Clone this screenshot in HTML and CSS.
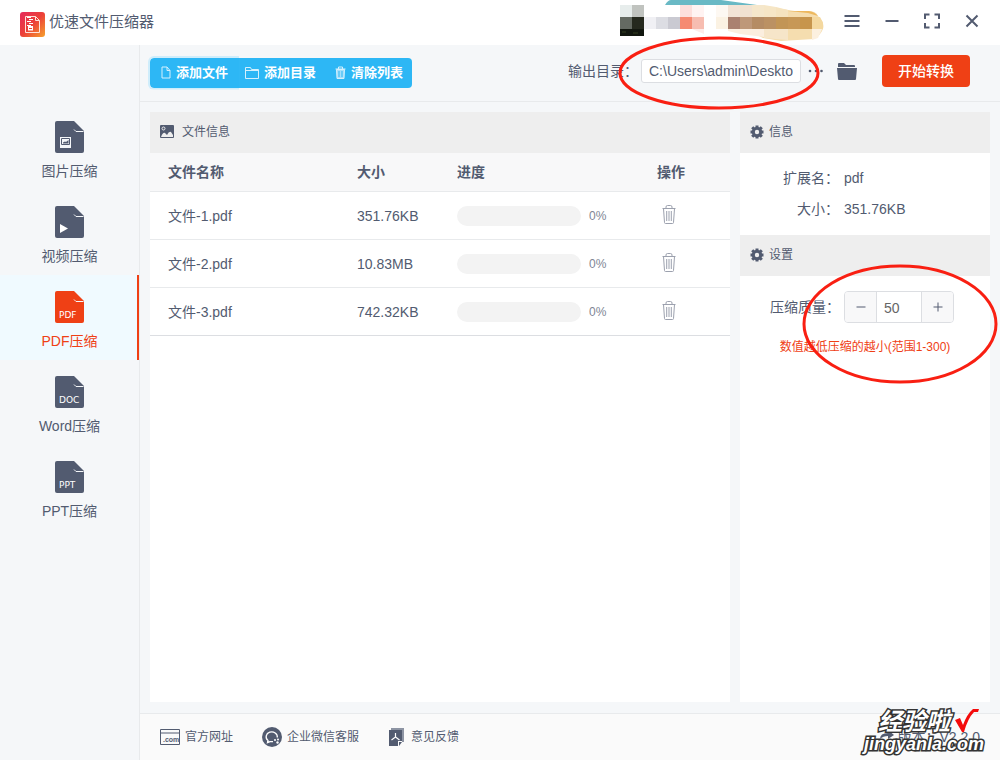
FILE: index.html
```html
<!DOCTYPE html>
<html lang="zh-CN">
<head>
<meta charset="utf-8">
<meta name="viewport" content="width=device-width, initial-scale=1">
<title>优速文件压缩器</title>
<link rel="stylesheet" href="styles.css">
</head>
<body>
<svg class="sprite" aria-hidden="true">
  <symbol id="sheet" viewBox="0 0 29 32"><path d="M2 0h17l10 10v20a2 2 0 0 1-2 2H2a2 2 0 0 1-2-2V2a2 2 0 0 1 2-2z" fill="currentColor"/><path d="M19 8.500l2 2h7.500" fill="none" stroke="#f5f7f9" stroke-width="1"/></symbol>
  <symbol id="trash" viewBox="0 0 14 19"><path d="M.5 3.500h13M4 3.500V2a1.500 1.500 0 0 1 1.500-1.500h3A1.500 1.500 0 0 1 10 2v1.500M1.500 3.500l1 14a1 1 0 0 0 1 1h7a1 1 0 0 0 1-1l1-14M4.700 6v10M7 6v10M9.300 6v10" fill="none" stroke="currentColor"/></symbol>
  <symbol id="gear" viewBox="0 0 14 14"><circle cx="7" cy="7" r="3.700" fill="none" stroke="currentColor" stroke-width="3"/><path d="M7 .5v2.500M7 11v2.500M.5 7H3M11 7h2.500M2.200 2.200L4 4M10 10l1.800 1.800M2.200 11.800L4 10M10 4l1.800-1.800" stroke="currentColor" stroke-width="3"/></symbol>
</svg>

<header class="titlebar">
  <svg class="logo" viewBox="0 0 25 25" aria-hidden="true">
    <defs><linearGradient id="lg" x1="0" y1="0" x2="1" y2="1"><stop offset="0" stop-color="#e52a5c"/><stop offset=".5" stop-color="#ec4038"/><stop offset="1" stop-color="#f6a22d"/></linearGradient></defs>
    <rect width="25" height="25" rx="3" fill="url(#lg)"/>
    <path d="M5.500 4.500h10l4 4V20.500h-14zM15.500 4.500v4h4" fill="none" stroke="#ffe3dc"/>
    <path d="M7 5.500h4M9 7.500h4M7 9.500h4M9 11.500h4M7 13.500h4" stroke="#fff"/>
    <path d="M8 14h5v4.500H8z" fill="#fff"/><path d="M9 16.500h3" stroke="#ec4038"/>
  </svg>
  <h1 class="app-name">优速文件压缩器</h1>
  <svg class="avatar" viewBox="0 0 204 42" aria-hidden="true">
    <path d="M45 5Q48 0 51 0h50l36 5z" fill="#69b9c5"/>
    <path d="M137 5l44 7q14-3 17 4 7 6 5 13-3 7-9 10l-33 2-18-3-8-4z" fill="#f5ddaf"/>
    <path d="M168 11h21q6 1 9 5l-10-3z" fill="#edb85e"/>
    <path d="M0 5h12v12H0z" fill="#e7edec"/><path d="M12 5h12v12H12z" fill="#c0c3bf"/>
    <path d="M0 17h12v12H0z" fill="#646a62"/><path d="M12 17h12v12H12z" fill="#25291e"/>
    <path d="M0 29h24v7H0z" fill="#12170f"/><path d="M2 32h4M13 33h5" stroke="#333e20"/>
    <path d="M24 17h12v12H24z" fill="#f0f0f4"/><path d="M36 17h12v12H36z" fill="#dcdde3"/><path d="M48 17h12v12H48z" fill="#cacad2"/>
    <path d="M60 5h12v12H60z" fill="#fddfdc"/><path d="M72 5h12v12H72z" fill="#fff3f2"/>
    <path d="M60 17h12v12H60z" fill="#f58a72"/><path d="M72 17h12v12H72z" fill="#f7bdb1"/>
    <path d="M60 29h12l12 5V29z" fill="#fdece9"/>
    <path d="M96 17h12v12H96z" fill="#fbf2e3"/><path d="M96 5h12v12H96z" fill="#fdf8f2"/>
    <path d="M108 5h12v12h-12z" fill="#f2e3d6"/><path d="M120 5h12v12h-12z" fill="#f1e2d1"/><path d="M132 5h12v12h-12z" fill="#f5e7cb"/><path d="M144 5l12 2v10h-12z" fill="#f6e6c6"/><path d="M156 7l12 3v7h-12z" fill="#f5e3bf"/>
    <path d="M108 17h12v12h-12z" fill="#aa8170"/><path d="M120 17h12v12h-12z" fill="#be9879"/><path d="M132 17h12v12h-12z" fill="#b58c64"/><path d="M144 17h12v12h-12z" fill="#bb9163"/><path d="M156 17h12v12h-12z" fill="#c29556"/><path d="M168 17h12v12h-12z" fill="#c79857"/><path d="M180 17h12v12h-12z" fill="#c7954c"/><path d="M192 17h8l3 6v6h-11z" fill="#f4d89f"/>
    <path d="M108 29h36v8l-24-3-12-3z" fill="#fbeedf"/><path d="M144 29h24v11l-24-2z" fill="#f6e5c9"/><path d="M192 29h10l-4 9-6 2z" fill="#fcf0df"/>
  </svg>
  <div class="window-controls">
    <button type="button" aria-label="菜单"><svg viewBox="0 0 16 16"><path d="M.5 3h15M.5 8h15M.5 13h15"/></svg></button>
    <button type="button" aria-label="最小化"><svg viewBox="0 0 16 16"><path d="M1.500 8h13"/></svg></button>
    <button type="button" aria-label="最大化"><svg viewBox="0 0 16 16"><path d="M1 6V1.500h4.500M10.500 1.500H15V6M15 10v4.500h-4.500M5.500 14.500H1V10" stroke-width="2"/></svg></button>
    <button type="button" aria-label="关闭"><svg viewBox="0 0 16 16"><path d="M2.500 2.500l11 11M13.500 2.500l-11 11"/></svg></button>
  </div>
</header>

<div class="shell">
  <nav class="sidebar">
    <a class="nav-item" href="#image"><svg class="nav-icon" viewBox="0 0 29 32"><use href="#sheet"/><path d="M5 16h11v11H5z" fill="#f5f7f9"/><path d="M6.500 17.500h8v6h-8z" fill="none" stroke="#525b70"/><path d="M8 22.500v-1l2-1 1 .5 2.500-2v3.500z" fill="#525b70"/></svg><span>图片压缩</span></a>
    <a class="nav-item" href="#video"><svg class="nav-icon" viewBox="0 0 29 32"><use href="#sheet"/><path d="M5 18l8 4.500-8 4.500z" fill="#fff"/></svg><span>视频压缩</span></a>
    <a class="nav-item nav-item--active" href="#pdf" aria-current="page"><svg class="nav-icon" viewBox="0 0 29 32"><use href="#sheet"/><text class="nav-tag" x="4" y="27">PDF</text></svg><span>PDF压缩</span></a>
    <a class="nav-item" href="#word"><svg class="nav-icon" viewBox="0 0 29 32"><use href="#sheet"/><text class="nav-tag" x="4" y="27">DOC</text></svg><span>Word压缩</span></a>
    <a class="nav-item" href="#ppt"><svg class="nav-icon" viewBox="0 0 29 32"><use href="#sheet"/><text class="nav-tag" x="4" y="27">PPT</text></svg><span>PPT压缩</span></a>
  </nav>

  <div class="workspace">
    <div class="toolbar">
      <div class="actions">
        <button class="action action--focus" type="button"><svg width="10" height="13" viewBox="0 0 10 13"><path d="M1 1h5l3 3.500V12H1zM6 1v3.500h3"/></svg>添加文件</button>
        <button class="action" type="button"><svg width="14" height="12" viewBox="0 0 14 12"><path d="M.5 11.500V.5h5l1 2h7v9zM.5 3.500h13"/></svg>添加目录</button>
        <button class="action" type="button"><svg width="11" height="13" viewBox="0 0 11 13"><path d="M.5 3h10M3.500 3V1h4v2"/><path d="M1.500 3.500l.5 9h7l.5-9z" fill="#a6dffb"/><path d="M4 5v6M7 5v6" stroke="#2db7f5"/></svg>清除列表</button>
      </div>
      <div class="output">
        <label for="outdir">输出目录：</label>
        <span class="path-wrap">
          <input class="path" id="outdir" type="text" value="C:\Users\admin\Deskto">
          <svg class="mark mark--path" viewBox="0 0 202 74" aria-hidden="true"><ellipse cx="101" cy="37" rx="99" ry="35"/></svg>
        </span>
        <button class="plain more" type="button" aria-label="更多"><svg width="16" height="4" viewBox="0 0 16 4"><circle cx="2" cy="2" r="1.300"/><circle cx="8" cy="2" r="1.300"/><circle cx="13.500" cy="2" r="1.300"/></svg></button>
        <button class="plain folder" type="button" aria-label="打开目录"><svg width="20" height="17" viewBox="0 0 20 17"><path d="M1 4V1q0-1 1-1h5l2 2h8q1 0 1 1v1z"/><path d="M0 5h20l-1 11q0 1-1 1H2q-1 0-1-1z"/></svg></button>
        <button class="start" type="button">开始转换</button>
      </div>
    </div>

    <div class="content">
      <main class="panel files">
        <h2 class="panel-head files-head"><svg width="14" height="14" viewBox="0 0 14 14"><rect width="14" height="13" rx="1" fill="currentColor"/><circle cx="3.500" cy="3.500" r="1.500" fill="none" stroke="#eee"/><path d="M1 12q2-5 4-4l2 2q2-4 4-3l2 3v2z" fill="#eee"/></svg>文件信息</h2>
        <table class="file-table">
          <colgroup><col><col class="col-size"><col class="col-progress"><col class="col-op"></colgroup>
          <thead><tr><th scope="col">文件名称</th><th scope="col">大小</th><th scope="col">进度</th><th scope="col">操作</th></tr></thead>
          <tbody>
            <tr><td>文件-1.pdf</td><td>351.76KB</td><td><div class="progress"><span class="bar"></span>0%</div></td><td><button class="plain delete" type="button" aria-label="删除"><svg width="14" height="19"><use href="#trash"/></svg></button></td></tr>
            <tr><td>文件-2.pdf</td><td>10.83MB</td><td><div class="progress"><span class="bar"></span>0%</div></td><td><button class="plain delete" type="button" aria-label="删除"><svg width="14" height="19"><use href="#trash"/></svg></button></td></tr>
            <tr><td>文件-3.pdf</td><td>742.32KB</td><td><div class="progress"><span class="bar"></span>0%</div></td><td><button class="plain delete" type="button" aria-label="删除"><svg width="14" height="19"><use href="#trash"/></svg></button></td></tr>
          </tbody>
        </table>
      </main>

      <aside class="panel details">
        <h2 class="panel-head"><svg width="14" height="14"><use href="#gear"/></svg>信息</h2>
        <dl class="info"><dt>扩展名：</dt><dd>pdf</dd><dt>大小：</dt><dd>351.76KB</dd></dl>
        <h2 class="panel-head"><svg width="14" height="14"><use href="#gear"/></svg>设置</h2>
        <div class="settings">
          <div class="quality">
            <label for="quality">压缩质量：</label>
            <div class="stepper">
              <button type="button" aria-label="减少"><svg width="10" height="10" viewBox="0 0 10 10"><path d="M.5 5h9"/></svg></button>
              <input id="quality" type="text" inputmode="numeric" value="50">
              <button type="button" aria-label="增加"><svg width="10" height="10" viewBox="0 0 10 10"><path d="M.5 5h9M5 .5v9"/></svg></button>
            </div>
          </div>
          <p class="hint">数值越低压缩的越小(范围1-300)</p>
          <svg class="mark mark--quality" viewBox="0 0 198 120" aria-hidden="true"><ellipse cx="99" cy="60" rx="96" ry="58"/></svg>
        </div>
      </aside>
    </div>

    <footer class="footer">
      <a href="#site"><svg width="20" height="16" viewBox="0 0 20 16"><path d="M.5.5h19v15H.5zM.5 4h19" fill="none" stroke="currentColor"/><text class="com-tag" x="3" y="13">.com</text></svg>官方网址</a>
      <a href="#wechat"><svg width="20" height="20" viewBox="0 0 20 20"><circle cx="10" cy="10" r="10" fill="currentColor"/><path d="M11 14.600l-3 0-2.500 1 .5-2A5.600 5 0 1 1 15.300 10.500" fill="none" stroke="#fff" stroke-width="1.300"/><circle cx="13" cy="13" r="1" fill="#fff"/><circle cx="16" cy="12.500" r="1" fill="#fff"/><circle cx="15.500" cy="15.500" r="1.200" fill="#fff"/></svg>企业微信客服</a>
      <a href="#feedback"><svg class="feedback-icon" width="18" height="18" viewBox="0 0 18 18"><path d="M3 1h12v13" fill="none" stroke="#8d94a3" stroke-width="2"/><path d="M1 2h13v11h-4v5H1z" fill="currentColor"/><path d="M11 14h3l-3 4z" fill="currentColor"/><path d="M7.500 5v4l-4 3M7.500 9l4 3" fill="none" stroke="#fff" stroke-width="1.200"/></svg>意见反馈</a>
      <div class="version">
        <svg width="16" height="16" viewBox="0 0 16 16"><path d="M2 10q0-6 8-6V1l6 5-6 4V7Q5 7 2 10z" fill="currentColor"/></svg>
        <span>版本：V2.2.0</span>
        <div class="watermark" aria-hidden="true">
          <div class="wm-top"><span>经验啦</span><svg width="24" height="24" viewBox="0 0 24 24"><path d="M0 11l5-2 3 7Q12 5 18 0h6l-1 3h-4Q13 9 9 23H7z" fill="#f40b0b"/></svg></div>
          <div class="wm-url">jingyanla.com</div>
        </div>
      </div>
    </footer>
  </div>
</div>
</body>
</html>
```

FILE: styles.css
```css
* { box-sizing: border-box; }
body {
  margin: 0;
  min-height: 100vh;
  display: flex;
  flex-direction: column;
  background: #f5f7f9;
  color: #525b70;
  font: 14px/20px "Liberation Sans", "Noto Sans CJK SC", sans-serif;
  overflow-x: hidden;
}
button, input { font: inherit; color: inherit; margin: 0; }
button { cursor: pointer; }
a { color: inherit; text-decoration: none; }
h1, h2, p, dl, dd { margin: 0; font-weight: 400; }
.sprite { position: absolute; width: 0; height: 0; }

.titlebar { display: flex; align-items: flex-start; height: 45px; padding: 0 8px 0 20px; background: #fff; }
.logo { width: 25px; height: 25px; margin-top: 12px; }
.app-name { margin: 12px auto 0 4px; font-size: 15px; line-height: 20px; }
.avatar { width: 204px; height: 42px; margin-right: 8px; }
.window-controls { display: flex; }
.window-controls button { display: grid; place-items: center; width: 40px; height: 42px; padding: 0; border: 0; background: none; }
.window-controls svg { width: 16px; height: 16px; fill: none; stroke: currentColor; stroke-width: 2; }

.shell { flex: 1; display: flex; }
.sidebar { width: 140px; flex: none; padding-top: 60px; border-right: 1px solid #e8eaec; }
.nav-item { display: flex; flex-direction: column; align-items: center; gap: 8px; height: 85px; padding-top: 16px; }
.nav-icon { width: 29px; height: 32px; }
.nav-item--active { color: #ef4015; background: #f0faff; box-shadow: inset -2px 0 #ef4015; }
.nav-tag { font: 9px "DejaVu Sans", sans-serif; fill: #fff; }

.workspace { flex: 1; min-width: 0; display: flex; flex-direction: column; }
.toolbar { display: flex; align-items: center; justify-content: space-between; height: 57px; padding: 0 30px 4px 10px; border-bottom: 1px solid #e8eaec; }
.actions { display: flex; margin-top: 3px; border-radius: 4px; background: #2db7f5; }
.action { display: flex; align-items: center; gap: 5px; height: 30px; padding: 0 9px 0 6px; border: 0; background: none; color: #fff; font-size: 13px; font-weight: 700; white-space: nowrap; }
.action svg { fill: none; stroke: #d5f0fd; }
.action--focus { padding: 0 11px 0 11px; border-radius: 4px 0 0 4px; box-shadow: 0 0 0 2px #cfedfb; clip-path: inset(-2px 0 -2px -2px); }
.action:last-child { padding-left: 10px; }
.output { display: flex; align-items: center; white-space: nowrap; }
.path-wrap { position: relative; display: flex; margin-left: 3px; }
.path { width: 160px; height: 24px; padding: 0 7px; border: 1px solid #dcdee2; border-radius: 3px; background: #fff; }
.mark { position: absolute; z-index: 2; fill: none; stroke: #f91f12; stroke-width: 3; pointer-events: none; }
.mark--path { left: -23px; top: -23px; width: 202px; height: 74px; }
.plain { display: flex; padding: 0; border: 0; background: none; }
.more { margin-left: 7px; fill: currentColor; }
.folder { margin-left: 13px; fill: currentColor; }
.start { width: 88px; height: 32px; margin-left: 25px; padding: 0; border: 0; border-radius: 4px; background: #ef4015; color: #fff; font-weight: 500; }

.content { flex: 1; display: flex; gap: 10px; padding: 10px 10px 11px; }
.panel { background: #fff; }
.files { flex: 1; min-width: 0; }
.details { width: 250px; flex: none; }
.panel-head { display: flex; align-items: center; gap: 5px; height: 41px; padding: 0 10px 1px; background: #eee; font-size: 12px; }
.files-head { gap: 8px; }
.file-table { width: 100%; table-layout: fixed; border-collapse: separate; border-spacing: 0; }
.col-size { width: 100px; }
.col-progress { width: 200px; }
.col-op { width: 91px; }
.file-table th, .file-table td { padding: 0 18px; text-align: left; border-bottom: 1px solid #e8eaec; }
.file-table th { height: 39px; background: #f8f8f9; font-weight: 700; }
.file-table td { height: 48px; }
.file-table tr:last-child td { border-bottom-color: #dcdee2; }
.progress { display: flex; align-items: center; gap: 8px; font-size: 12px; color: #808695; }
.bar { width: 124px; height: 20px; flex: none; border-radius: 10px; background: #f3f3f3; }
.delete { margin: 0 0 2px 5px; color: #9ca1ae; }

.info { display: grid; grid-template-columns: 89px 1fr; column-gap: 5px; row-gap: 11px; padding: 15px 10px 16px; }
.info dt { text-align: right; }
.info dd { margin-left: 0; }
.settings { position: relative; padding: 15px 0; }
.quality { display: flex; align-items: center; padding-left: 30px; gap: 4px; }
.stepper { display: flex; width: 110px; height: 32px; border: 1px solid #dcdee2; border-radius: 4px; overflow: hidden; }
.stepper button { display: grid; place-items: center; width: 31px; padding: 0; border: 0; background: #f8f8f9; stroke: currentColor; }
.stepper input { flex: 1; min-width: 0; width: 44px; padding: 1px 7px 0; border: 0; border-left: 1px solid #dcdee2; border-right: 1px solid #dcdee2; color: #666; }
.hint { margin-top: 14px; text-align: center; color: #ef4015; font-size: 12px; }
.mark--quality { left: 61px; top: -12px; width: 198px; height: 120px; }

.footer { display: flex; align-items: center; height: 47px; padding: 0 20px; border-top: 1px solid #e8eaec; background: #fafafa; font-size: 12px; }
.footer a { display: flex; align-items: center; gap: 5px; margin-right: 29px; white-space: nowrap; }
.com-tag { font: bold 7px "Liberation Sans", sans-serif; fill: currentColor; }
.version { position: relative; display: flex; align-items: center; gap: 4px; margin-left: auto; font-size: 14px; white-space: nowrap; }
.watermark { position: absolute; right: -4px; top: -18px; color: #fff; font-style: italic; font-weight: 700; -webkit-text-stroke: 3px #333; paint-order: stroke fill; }
.wm-top { display: flex; justify-content: flex-end; gap: 5px; padding-right: 5px; font-size: 24px; line-height: 26px; }
.wm-url { font-size: 18px; line-height: 18px; }
```
